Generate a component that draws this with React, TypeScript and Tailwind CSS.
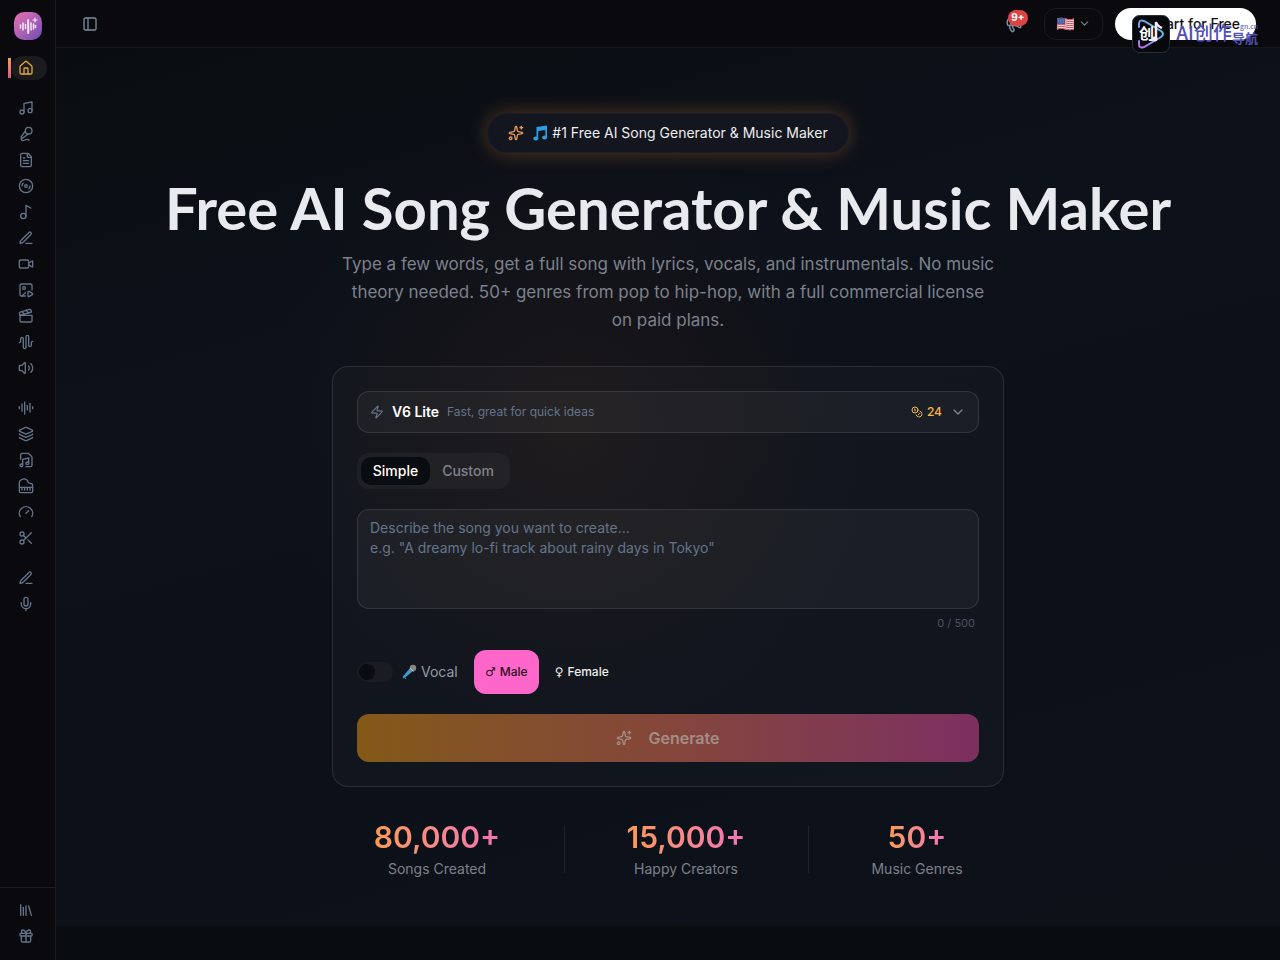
import {
  AudioLines,
  AudioWaveform,
  ChevronDown,
  Clapperboard,
  Coins,
  Disc3,
  FileText,
  Gauge,
  Gift,
  House,
  ImagePlay,
  Layers,
  Library,
  Megaphone,
  Mic,
  MicVocal,
  Music,
  Music2,
  PanelLeft,
  Piano,
  Scissors,
  Sparkles,
  Video,
  Volume2,
  Zap,
} from "lucide-react";

function Pen({ size = 16 }: { size?: number }) {
  return (
    <svg width={size} height={size} viewBox="0 0 24 24" fill="none" stroke="currentColor" strokeWidth="2" strokeLinecap="round" strokeLinejoin="round" aria-hidden="true">
      <path d="M12 20h9" />
      <path d="M16.376 3.622a1 1 0 0 1 3.002 3.002L7.368 18.635a2 2 0 0 1-.855.506l-2.872.838a.5.5 0 0 1-.620-.620l.838-2.872a2 2 0 0 1 .506-.854z" />
    </svg>
  );
}

function SongFile({ size = 16 }: { size?: number }) {
  return (
    <svg width={size} height={size} viewBox="0 0 24 24" fill="none" stroke="currentColor" strokeWidth="2" strokeLinecap="round" strokeLinejoin="round" aria-hidden="true">
      <path d="M4 11V4a2 2 0 0 1 2-2h9.500L21 7.500V20a2 2 0 0 1-2 2h-7" />
      <circle cx="5" cy="20" r="2" />
      <circle cx="14" cy="17" r="2" />
      <path d="M7 20v-9l9-2v8" />
    </svg>
  );
}

const groups = [
  [{ icon: House, label: "Home" }],
  [
    { icon: Music, label: "Song generator" },
    { icon: MicVocal, label: "Vocals" },
    { icon: FileText, label: "Lyrics" },
    { icon: Disc3, label: "Covers" },
    { icon: Music2, label: "Melody" },
    { icon: Pen, label: "Edit song" },
    { icon: Video, label: "Music video" },
    { icon: ImagePlay, label: "Image to music" },
    { icon: Clapperboard, label: "Video to music" },
    { icon: AudioWaveform, label: "Sound effects" },
    { icon: Volume2, label: "Text to speech" },
  ],
  [
    { icon: AudioLines, label: "Mastering" },
    { icon: Layers, label: "Stems" },
    { icon: SongFile, label: "Sheet music" },
    { icon: Piano, label: "MIDI" },
    { icon: Gauge, label: "Tempo" },
    { icon: Scissors, label: "Trim" },
  ],
  [
    { icon: Pen, label: "Write" },
    { icon: Mic, label: "Record" },
  ],
];

const stats = [
  { value: "80,000+", label: "Songs Created", width: "w-[125px]" },
  { value: "15,000+", label: "Happy Creators", width: "w-[115px]" },
  { value: "50+", label: "Music Genres", width: "w-[89px]" },
];

function Sidebar() {
  return (
    <aside className="sticky top-0 flex h-screen w-14 shrink-0 flex-col border-r border-[#1c1a1d] bg-[#09090e] text-[#64748b]">
      <a href="#" aria-label="Home page" className="mx-auto mt-3 flex size-7 items-center justify-center rounded-[10px] bg-linear-to-br from-[#ed6eb0] to-[#6f4bb5] text-[#fbe6f5]">
        <svg width="20" height="20" viewBox="0 0 20 20" fill="none" stroke="currentColor" strokeWidth="1.500" strokeLinecap="round">
          <path d="M2.500 9v3M5 7v7M7.500 8.500v4M13 7v7M15.500 8v5M17.500 9.500v2" />
          <path d="M10.200 4v13" strokeWidth="2" />
          <path d="M17 2v4M15 4h4" strokeWidth="1.200" />
        </svg>
      </a>
      <nav className="mt-4 flex flex-1 flex-col gap-4 px-2">
        {groups.map((group, g) => (
          <ul key={g} className="flex flex-col gap-0.5">
            {group.map((item) => {
              const Icon = item.icon;
              const active = item.label === "Home";
              return (
                <li key={item.label} className="relative">
                  {active && <span className="absolute top-0.5 left-0 h-5 w-[3px] bg-linear-to-b from-[#f5a040] to-[#d9568d]" />}
                  <a href="#" aria-label={item.label} className={active ? "ml-[3px] flex h-6 items-center rounded-xl bg-[#1b1b1f] pl-[7px] text-[#e3a739]" : "flex h-6 items-center pl-2.5"}>
                    <Icon size={16} />
                  </a>
                </li>
              );
            })}
          </ul>
        ))}
      </nav>
      <div className="flex flex-col gap-0.5 border-t border-[#1b1c20] px-2 pt-2.5 pb-3">
        <a href="#" aria-label="Library" className="flex h-6 items-center pl-2.5">
          <Library size={16} />
        </a>
        <a href="#" aria-label="Rewards" className="flex h-6 items-center pl-2.5">
          <Gift size={16} />
        </a>
      </div>
    </aside>
  );
}

function Flag() {
  return (
    <svg width="17" height="14" viewBox="0 0 17 14" aria-hidden="true">
      <path d="M0 1.500Q4 0 8.500 1.500T17 1.500V12.500Q13 14 8.500 12.500T0 12.500Z" fill="#eee5e6" />
      <g stroke="#d34a58" strokeWidth="1" fill="none">
        <path d="M0 2Q4 .5 8.500 2T17 2M0 4Q4 2.500 8.500 4T17 4M0 6Q4 4.500 8.500 6T17 6M0 8Q4 6.500 8.500 8T17 8M0 10Q4 8.500 8.500 10T17 10M0 12Q4 10.500 8.500 12T17 12" />
      </g>
      <path d="M0 1.500Q4 0 8 1.300V7.500Q4 6 0 7.500Z" fill="#45579a" />
      <path d="M1 3h6M1 5h6" stroke="#c8d0e8" strokeWidth=".7" strokeDasharray=".8 1" />
    </svg>
  );
}

function Header() {
  return (
    <header className="flex h-12 items-center justify-between border-b border-[#15171b] bg-[#09090e] pr-6 pl-[26px]">
      <button type="button" aria-label="Toggle sidebar" className="text-[#7c899c]">
        <PanelLeft size={16} />
      </button>
      <div className="flex items-center gap-3">
        <button type="button" aria-label="Announcements" className="relative flex h-8 w-9 items-center justify-center text-[#7c899c]">
          <Megaphone size={18} />
          <span className="absolute top-0.5 left-3 flex h-4 w-5 items-center justify-center rounded-full bg-[#dd4244] text-[10px] font-bold text-white">9+</span>
        </button>
        <button type="button" aria-label="Language" className="flex h-8 w-[59px] items-center justify-center gap-1 rounded-xl border border-[#19191e] text-[#7e8188]">
          <Flag />
          <ChevronDown size={13} />
        </button>
        <button type="button" className="h-8 w-[141px] rounded-full bg-white pr-4 text-right text-sm font-medium text-[#101014]">
          Start for Free
        </button>
      </div>
    </header>
  );
}

function SiteMark() {
  return (
    <div className="pointer-events-none absolute top-[15px] right-[22px] flex items-center gap-1.5">
      <svg width="38" height="38" viewBox="0 0 38 38" aria-hidden="true">
        <defs>
          <linearGradient id="mark" x1="0" y1="1" x2="1" y2="0">
            <stop offset="0" stopColor="#c26be8" />
            <stop offset=".5" stopColor="#6ea1e8" />
            <stop offset="1" stopColor="#59d9d1" />
          </linearGradient>
        </defs>
        <rect x=".5" y=".5" width="37" height="37" rx="7" fill="#07080c" stroke="#28303a" />
        <path d="M7 12V9q0-5 5-3l17 10q4 3 0 6L12 32q-5 2-5-3v-3" fill="none" stroke="url(#mark)" strokeWidth="2" strokeLinecap="round" />
        <text x="7" y="24" fontSize="15" fontWeight="bold" fill="#fff" fontFamily="Noto Sans CJK SC, sans-serif">创</text>
        <path d="M24 24V7q1 4 6 6" fill="none" stroke="#f4e8fa" strokeWidth="2.500" />
        <ellipse cx="22.500" cy="24" rx="3" ry="2.500" fill="#f4e8fa" />
      </svg>
      <div className="flex items-end text-[#5150b4]">
        <span className="pb-1 font-['Noto_Sans_CJK_SC',sans-serif] text-[19px] leading-7 font-medium">AI创作</span>
        <span className="flex flex-col pb-1 text-right font-['Noto_Sans_CJK_SC',sans-serif]">
          <span className="text-[7px] leading-2">gn.cn</span>
          <span className="text-[13px] leading-4 font-bold">导航</span>
        </span>
      </div>
    </div>
  );
}

function NoteGlyph() {
  return (
    <svg width="16" height="16" viewBox="0 0 16 16" fill="#2f9fe3" aria-hidden="true">
      <path d="M4.500 2 15 .5v12h-1.700V5L6.200 6v7.500H4.500Z" />
      <ellipse cx="3.800" cy="13.500" rx="2.500" ry="2" />
      <ellipse cx="12.600" cy="12.400" rx="2.500" ry="2" />
    </svg>
  );
}

function MicGlyph() {
  return (
    <svg width="16" height="16" viewBox="0 0 16 16" aria-hidden="true">
      <path d="m9.500 3.500 3 3L3 14.500 1.500 13Z" fill="#3e9cd0" />
      <path d="M2 14q2-2 3 1" fill="none" stroke="#3e7fae" />
      <circle cx="12" cy="4" r="3.200" fill="#8a8580" />
      <path d="m9 4 3.500 3.500" stroke="#c9c2b8" />
    </svg>
  );
}

function SongForm() {
  return (
    <form className="mt-8 flex w-full max-w-2xl flex-col rounded-2xl border border-white/10 bg-white/[0.025] p-6">
      <button type="button" className="flex h-[42px] items-center gap-2 rounded-xl border border-white/10 bg-white/[0.04] px-3 text-left">
        <Zap size={14} className="text-[#64748b]" />
        <span className="text-sm font-semibold text-white">V6 Lite</span>
        <span className="text-xs text-[#64748b]">Fast, great for quick ideas</span>
        <span className="ml-auto flex items-center gap-1 text-xs font-medium text-[#f3b64c]">
          <Coins size={12} />
          24
        </span>
        <ChevronDown size={16} className="text-[#7c8592]" />
      </button>

      <div role="tablist" className="mt-5 flex h-9 self-start rounded-xl bg-white/[0.04] p-1 text-sm font-medium">
        <button type="button" role="tab" aria-selected="true" className="w-[69px] rounded-[10px] bg-[#090c10] text-white">
          Simple
        </button>
        <button type="button" role="tab" aria-selected="false" className="w-19 text-[#80828c]">
          Custom
        </button>
      </div>

      <textarea
        aria-label="Song description"
        maxLength={500}
        placeholder={'Describe the song you want to create...\ne.g. "A dreamy lo-fi track about rainy days in Tokyo"'}
        className="mt-5 h-[100px] resize-none rounded-xl border border-white/10 bg-white/[0.04] px-3 py-2 text-sm text-white placeholder:text-[#64748b]"
      />
      <p className="mt-1.5 pr-1 text-right text-[11px] leading-4 text-[#4b5362]">0 / 500</p>

      <div className="mt-[19px] flex h-11 items-center">
        <label className="flex items-center text-sm text-[#949ba8]">
          <input type="checkbox" className="peer sr-only" />
          <span className="flex h-5 w-9 items-center rounded-full bg-[#1a1c21] px-0.5">
            <span className="size-4 rounded-full bg-[#090c10]" />
          </span>
          <span className="mr-1 ml-2">
            <MicGlyph />
          </span>
          Vocal
        </label>
        <button type="button" className="ml-4 flex h-11 w-[65px] items-center justify-center gap-1 rounded-xl bg-[#ff66c9] text-xs font-medium text-[#2b1022]">
          <span className="font-['DejaVu_Sans',sans-serif]">♂</span>
          Male
        </button>
        <button type="button" className="flex h-11 w-[86px] items-center justify-center gap-1 text-xs font-medium text-[#eeeff2]">
          <span className="font-['DejaVu_Sans',sans-serif]">♀</span>
          Female
        </button>
      </div>

      <button type="submit" disabled className="mt-5 flex h-12 items-center justify-center gap-4 rounded-xl bg-linear-to-r from-[#835916] via-[#84463a] to-[#7d2f60] font-semibold text-[#a38d87]">
        <Sparkles size={16} />
        Generate
      </button>
    </form>
  );
}

export default function App() {
  return (
    <div className="relative flex min-h-screen bg-[#0a0d10] font-['Inter','Noto_Sans',sans-serif]">
      <Sidebar />
      <div className="flex min-w-0 flex-1 flex-col">
        <Header />
        <main className="flex flex-col items-center bg-[radial-gradient(circle_at_42%_43%,#1a1718_0,#18151899_16%,transparent_36%),linear-gradient(165deg,#0a0d10_0%,#0c111a_30%,#0c1019_60%,#0d1219_100%)] px-6 pt-[65px] pb-[47px]">
          <p className="flex h-10 items-center gap-2 rounded-full border border-[#1b1e26] bg-[#13161e] px-5 text-sm text-[#eceef1] shadow-[0_0_20px_rgba(251,146,60,0.3)]">
            <Sparkles size={16} className="text-[#e79a56]" />
            <span className="flex items-center gap-1">
              <NoteGlyph />
              #1 Free AI Song Generator &amp; Music Maker
            </span>
          </p>
          <h1 className="mt-[25px] text-center font-['Lato',sans-serif] text-[58px] leading-[60px] font-bold text-[#e8eaed]">
            Free AI Song Generator &amp; Music Maker
          </h1>
          <p className="mt-3 max-w-[655px] text-center text-[17px] leading-7 text-[#7d818c]">
            Type a few words, get a full song with lyrics, vocals, and instrumentals. No music theory needed. 50+ genres from pop to hip-hop, with a full commercial license on paid plans.
          </p>
          <SongForm />
          <dl className="mt-8 flex gap-16">
            {stats.map((stat, i) => (
              <div key={stat.label} className="flex items-center gap-16">
                {i > 0 && <span className="h-12 w-px bg-[#1d2129]" />}
                <div className={`flex flex-col-reverse items-center whitespace-nowrap ${stat.width}`}>
                  <dt className="text-sm leading-5 text-[#7d818c]">{stat.label}</dt>
                  <dd className="mb-1 bg-linear-to-r from-[#fb9a50] to-[#f472b6] bg-clip-text text-3xl leading-9 font-semibold text-transparent">{stat.value}</dd>
                </div>
              </div>
            ))}
          </dl>
        </main>
      </div>
      <SiteMark />
    </div>
  );
}
